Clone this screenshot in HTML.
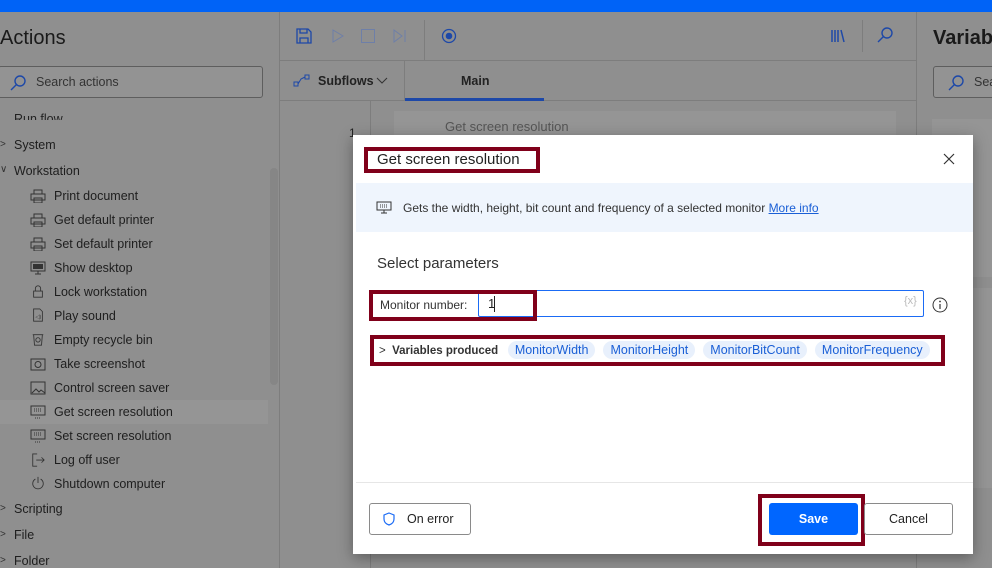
<!DOCTYPE html>
<html style="background:#8f8f8f"><head><meta charset="utf-8"><style>
*{box-sizing:border-box;margin:0;padding:0}
body{width:992px;height:568px;overflow:hidden;background:#8f8f8f;font-family:"Liberation Sans",sans-serif;position:relative;color:#1f1f1f}
.abs{position:absolute}
.top{left:0;top:0;width:992px;height:12px;background:#0063f7}
.vl{background:#7d7d7d;width:1px}
.hl{background:#7d7d7d;height:1px}
.item{position:absolute;left:54px;font-size:12.5px;color:#1e1e1e}
.cat{position:absolute;left:14px;font-size:12.5px;color:#1e1e1e}
.chev{position:absolute;left:0;font-size:10px;color:#333}
.ic{position:absolute;left:30px;width:16px;height:14px}
.modal{left:353px;top:135px;width:620px;height:419px;background:#fff;box-shadow:0 4px 14px rgba(0,0,0,.35)}
.red{position:absolute;border:4px solid #80001a}
.chip{display:inline-block;background:#e8f0fc;color:#1a5fd6;border-radius:9px;padding:2px 7px;font-size:12.5px;margin-right:8px}
</style></head><body>
<div class="abs" style="left:0;top:0;width:992px;height:568px;background:#8f8f8f"></div>
<div class="abs top"></div>
<div class="abs" style="left:0;top:27px;font-size:20px;color:#1a1a1a">Actions</div>
<div class="abs" style="left:-2px;top:66px;width:265px;height:32px;border:1px solid #5e5e5e;border-radius:3px;background:#939393"></div>
<svg class="abs" style="left:9px;top:74px" width="18" height="18"><circle cx="11" cy="7" r="5" fill="none" stroke="#1d48a8" stroke-width="1.4"/><path d="M7.5 10.5L2 16" stroke="#1d48a8" stroke-width="1.4"/></svg>
<div class="abs" style="left:36px;top:75px;font-size:12.5px;color:#333">Search actions</div>
<div class="abs" style="left:14px;top:113px;font-size:12.5px;color:#222;height:7px;overflow:hidden;line-height:1">Run flow</div>
<div class="chev" style="top:139px">&gt;</div><div class="cat" style="top:138px">System</div>
<div class="chev" style="top:164px">&#8744;</div><div class="cat" style="top:164px">Workstation</div>
<div class="abs" style="left:0;top:400px;width:268px;height:24px;background:#959595"></div>
<div class="abs" style="left:270px;top:168px;width:8px;height:217px;background:#868686;border-radius:4px"></div>
<svg class="ic" style="top:189px" viewBox="0 0 16 14"><path d="M4 1h8v4H4zM1 5h14v6H1zM4 9h8v5H4z" fill="none" stroke="#333"/></svg>
<div class="item" style="top:189px">Print document</div>
<svg class="ic" style="top:213px" viewBox="0 0 16 14"><path d="M4 1h8v4H4zM1 5h14v6H1zM4 9h8v5H4z" fill="none" stroke="#333"/></svg>
<div class="item" style="top:213px">Get default printer</div>
<svg class="ic" style="top:237px" viewBox="0 0 16 14"><path d="M4 1h8v4H4zM1 5h14v6H1zM4 9h8v5H4z" fill="none" stroke="#333"/></svg>
<div class="item" style="top:237px">Set default printer</div>
<svg class="ic" style="top:261px" viewBox="0 0 16 14"><rect x="1" y="1" width="14" height="9" fill="none" stroke="#333"/><rect x="3" y="3" width="10" height="5" fill="#333"/><path d="M5 13h6M8 10v3" stroke="#333"/></svg>
<div class="item" style="top:261px">Show desktop</div>
<svg class="ic" style="top:284px" viewBox="0 0 16 16"><path d="M5 8V5a3 3 0 0 1 6 0v3M3 8h10v7H3z" fill="none" stroke="#333"/></svg>
<div class="item" style="top:285px">Lock workstation</div>
<svg class="ic" style="top:308px" viewBox="0 0 16 16"><path d="M3 1h7l3 3v11H3z" fill="none" stroke="#333"/><text x="5" y="12" font-size="6" fill="#333">◁)</text></svg>
<div class="item" style="top:309px">Play sound</div>
<svg class="ic" style="top:332px" viewBox="0 0 16 16"><path d="M2 3h12M3 3l1 12h8l1-12" fill="none" stroke="#333"/><circle cx="8" cy="9" r="2.5" fill="none" stroke="#333"/></svg>
<div class="item" style="top:333px">Empty recycle bin</div>
<svg class="ic" style="top:357px" viewBox="0 0 16 14"><rect x="1" y="2" width="14" height="11" fill="none" stroke="#333"/><circle cx="8" cy="7.5" r="3" fill="none" stroke="#333"/></svg>
<div class="item" style="top:357px">Take screenshot</div>
<svg class="ic" style="top:381px" viewBox="0 0 16 14"><rect x="1" y="1" width="14" height="12" fill="none" stroke="#333"/><path d="M2 12l4-4 3 3 2-2 4 3" fill="none" stroke="#333"/></svg>
<div class="item" style="top:381px">Control screen saver</div>
<svg class="ic" style="top:405px" viewBox="0 0 16 14"><rect x="1" y="1" width="14" height="9" fill="none" stroke="#333"/><path d="M4 4h8M4 6h8M5 13h6" stroke="#333" stroke-dasharray="1 1"/></svg>
<div class="item" style="top:405px">Get screen resolution</div>
<svg class="ic" style="top:429px" viewBox="0 0 16 14"><rect x="1" y="1" width="14" height="9" fill="none" stroke="#333"/><path d="M4 4h8M4 6h8M5 13h6" stroke="#333" stroke-dasharray="1 1"/></svg>
<div class="item" style="top:429px">Set screen resolution</div>
<svg class="ic" style="top:453px" viewBox="0 0 16 16"><path d="M7 1H2v14h5M6 8h9M12 5l3 3-3 3" fill="none" stroke="#333"/></svg>
<div class="item" style="top:453px">Log off user</div>
<svg class="ic" style="top:476px" viewBox="0 0 16 16"><path d="M5 3.5a6 6 0 1 0 6 0M8 1v7" fill="none" stroke="#333"/></svg>
<div class="item" style="top:477px">Shutdown computer</div>
<div class="chev" style="top:503px">&gt;</div><div class="cat" style="top:502px">Scripting</div>
<div class="chev" style="top:529px">&gt;</div><div class="cat" style="top:528px">File</div>
<div class="chev" style="top:555px">&gt;</div><div class="cat" style="top:554px">Folder</div>

<div class="abs vl" style="left:279px;top:12px;height:556px"></div>
<div class="abs hl" style="left:280px;top:60px;width:636px"></div>
<div class="abs hl" style="left:280px;top:100px;width:636px"></div>
<div class="abs vl" style="left:424px;top:20px;height:40px"></div>
<div class="abs vl" style="left:404px;top:60px;height:40px"></div>
<div class="abs vl" style="left:916px;top:12px;height:556px"></div>
<div class="abs vl" style="left:370px;top:100px;height:468px"></div>
<svg class="abs" style="left:296px;top:28px" width="16" height="16"><path d="M1 1h11l3 3v11H1z M4 1v4h7V1M4 15v-5h8v5" fill="none" stroke="#1d48a8" stroke-width="1.3"/></svg>
<svg class="abs" style="left:331px;top:29px" width="14" height="14"><path d="M2 1l10 6-10 6z" fill="none" stroke="#6e7fa8"/></svg>
<div class="abs" style="left:361px;top:29px;width:14px;height:14px;border:1.3px solid #6e7fa8"></div>
<svg class="abs" style="left:393px;top:29px" width="14" height="14"><path d="M1 1l8 6-8 6zM12 1v12" fill="none" stroke="#6e7fa8"/></svg>
<svg class="abs" style="left:441px;top:28px" width="16" height="16"><circle cx="8" cy="8" r="6.5" fill="none" stroke="#1d48a8" stroke-width="1.3"/><circle cx="8" cy="8" r="3.3" fill="#1d48a8"/></svg>
<svg class="abs" style="left:830px;top:29px" width="16" height="14"><path d="M2 1v12M5 1v12M8 1v12M11 1l3 12" stroke="#1d48a8" stroke-width="1.5" fill="none"/></svg>
<div class="abs vl" style="left:862px;top:20px;height:32px"></div>
<svg class="abs" style="left:876px;top:26px" width="18" height="18"><circle cx="11" cy="7" r="5" fill="none" stroke="#1d48a8" stroke-width="1.4"/><path d="M7.5 10.5L2 16" stroke="#1d48a8" stroke-width="1.4"/></svg>
<svg class="abs" style="left:293px;top:74px" width="18" height="14"><rect x="1" y="8" width="4" height="4" fill="none" stroke="#1d48a8"/><rect x="12" y="1" width="4" height="4" fill="none" stroke="#1d48a8"/><path d="M5 10l3-5 4-2" fill="none" stroke="#1d48a8"/></svg>
<div class="abs" style="left:318px;top:74px;font-size:12.5px;font-weight:bold;color:#222">Subflows</div>
<svg class="abs" style="left:376px;top:77px" width="12" height="8"><path d="M1 1l5 5 5-5" fill="none" stroke="#333"/></svg>
<div class="abs" style="left:461px;top:74px;font-size:12.5px;font-weight:bold;color:#222">Main</div>
<div class="abs" style="left:405px;top:98px;width:139px;height:3px;background:#1d48a8"></div>
<div class="abs" style="left:349px;top:126px;font-size:12px;color:#222">1</div>
<div class="abs" style="left:394px;top:111px;width:502px;height:30px;background:#959595"></div>
<div class="abs" style="left:445px;top:119px;font-size:13px;color:#555">Get screen resolution</div>

<div class="abs" style="left:933px;top:27px;font-size:20px;font-weight:bold;color:#1a1a1a">Variabl</div>
<div class="abs" style="left:933px;top:66px;width:70px;height:32px;border:1px solid #5e5e5e;border-radius:3px;background:#939393"></div>
<svg class="abs" style="left:947px;top:74px" width="18" height="18"><circle cx="11" cy="7" r="5" fill="none" stroke="#1d48a8" stroke-width="1.4"/><path d="M7.5 10.5L2 16" stroke="#1d48a8" stroke-width="1.4"/></svg>
<div class="abs" style="left:974px;top:75px;font-size:12.5px;color:#333">Sea</div>
<div class="abs" style="left:932px;top:119px;width:60px;height:158px;background:#959595"></div>
<div class="abs" style="left:932px;top:288px;width:60px;height:200px;background:#959595"></div>

<div class="abs modal">
<div class="abs" style="left:24px;top:16px;font-size:15px;color:#222">Get screen resolution</div>
<div class="red" style="left:11px;top:12px;width:176px;height:26px"></div>
<svg class="abs" style="left:590px;top:18px" width="12" height="12"><path d="M1 1l10 10M11 1L1 11" stroke="#333" stroke-width="1.2"/></svg>
<div class="abs" style="left:3px;top:48px;width:617px;height:49px;background:#eff5fd"></div>
<svg class="abs" style="left:23px;top:66px" width="16" height="13"><rect x="1" y="1" width="14" height="8" fill="none" stroke="#333"/><path d="M4 4h8M4 6h8" stroke="#333" stroke-dasharray="1 1"/><path d="M5 12h6M8 9v3" stroke="#333"/></svg>
<div class="abs" style="left:50px;top:66px;font-size:12px;color:#333">Gets the width, height, bit count and frequency of a selected monitor <span style="color:#1a5fd6;text-decoration:underline">More info</span></div>
<div class="abs" style="left:24px;top:120px;font-size:15px;color:#333">Select parameters</div>
<div class="abs" style="left:125px;top:155px;width:446px;height:27px;border:1.3px solid #1a6bf5;border-radius:2px"></div>
<div class="abs" style="left:551px;top:160px;font-size:11px;color:#bbb">{x}</div>
<svg class="abs" style="left:579px;top:162px" width="16" height="16"><circle cx="8" cy="8" r="7" fill="none" stroke="#333"/><path d="M8 7v5" stroke="#333" stroke-width="1.2"/><circle cx="8" cy="4.5" r=".9" fill="#333"/></svg>
<div class="red" style="left:16px;top:155px;width:168px;height:31px"></div>
<div class="abs" style="left:27px;top:163px;font-size:12px;color:#333">Monitor number:</div>
<div class="abs" style="left:135px;top:161px;font-size:13px;color:#222">1</div>
<div class="abs" style="left:141px;top:161px;width:1px;height:16px;background:#222"></div>
<div class="red" style="left:17px;top:200px;width:575px;height:31px"></div>
<div class="abs" style="left:26px;top:206px;font-size:11.5px;color:#333;white-space:nowrap">&gt;&nbsp; <b>Variables produced</b>&nbsp;&nbsp; <span class="chip">MonitorWidth</span><span class="chip">MonitorHeight</span><span class="chip">MonitorBitCount</span><span class="chip">MonitorFrequency</span></div>
<div class="abs" style="left:3px;top:347px;width:617px;height:1px;background:#e6e6e6"></div>
<div class="abs" style="left:16px;top:368px;width:102px;height:32px;border:1px solid #8a8a8a;border-radius:3px"></div>
<svg class="abs" style="left:30px;top:377px" width="12" height="14"><path d="M6 1l5 2v4c0 3-2 5-5 6-3-1-5-3-5-6V3z" fill="none" stroke="#1a6bf5" stroke-width="1.2"/></svg>
<div class="abs" style="left:54px;top:377px;font-size:12.5px;color:#222">On error</div>
<div class="red" style="left:405px;top:359px;width:107px;height:52px"></div>
<div class="abs" style="left:416px;top:368px;width:89px;height:32px;background:#0066ff;border-radius:3px;color:#fff;font-size:12.5px;font-weight:bold;text-align:center;line-height:32px">Save</div>
<div class="abs" style="left:511px;top:368px;width:89px;height:32px;border:1px solid #8a8a8a;border-radius:3px;font-size:12.5px;color:#222;text-align:center;line-height:30px">Cancel</div>
</div>
</body></html>
